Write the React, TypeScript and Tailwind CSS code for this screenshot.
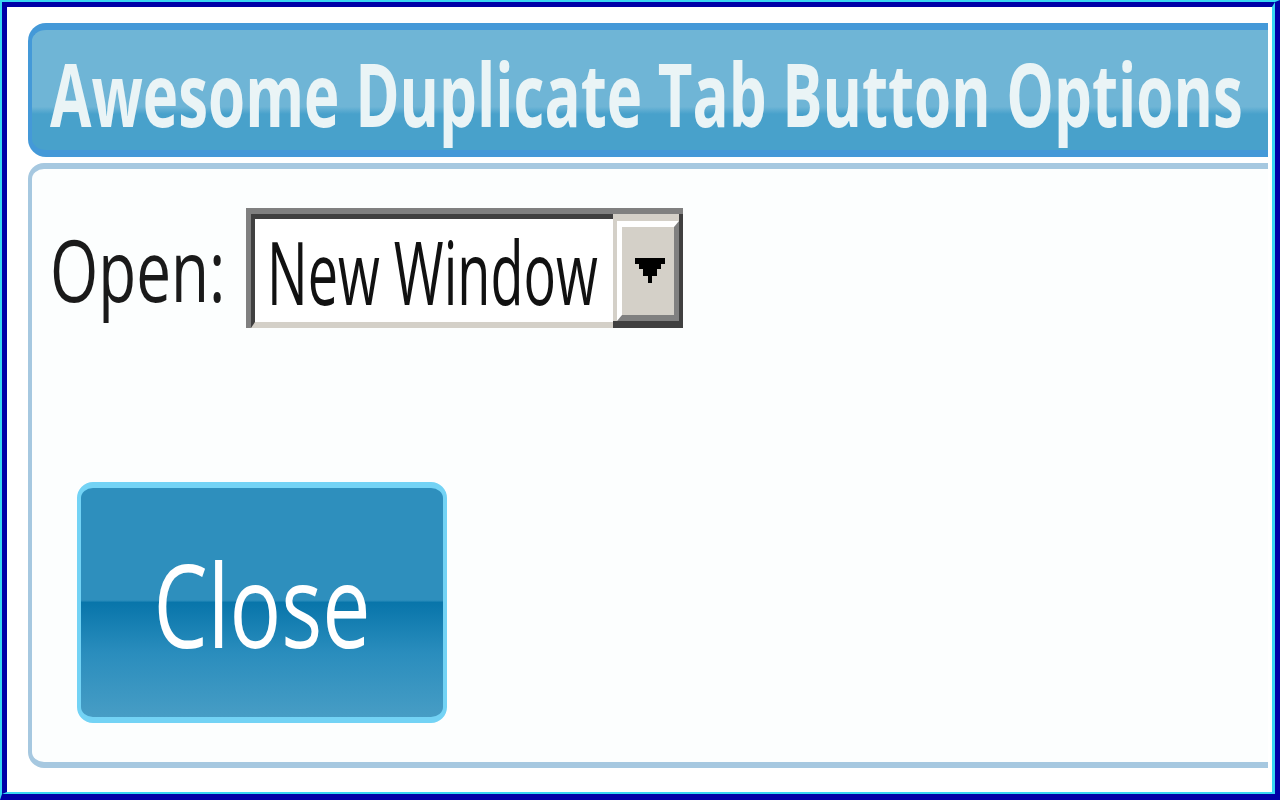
function DropArrow() {
  return (
    <svg width="30" height="25" viewBox="0 0 30 25" className="block">
      <path d="M0 0H30V6H26V11H22V18H17V25H13V18H8V11H4V6H0Z" fill="#000" />
    </svg>
  );
}

export default function App() {
  return (
    <div className="h-[800px] w-[1280px] overflow-hidden font-['Open_Sans',sans-serif]">
      {/* window frame */}
      <div className="h-full border-t-2 border-l-2 border-r-[5px] border-b-[6px] border-t-[#38d6f2] border-l-[#38d6f2] border-r-[#0000a8] border-b-[#0000a8]">
        <div className="h-full border-t-[5px] border-l-[5px] border-r-[3px] border-b-2 border-t-[#0000a8] border-l-[#0000a8] border-r-[#38d6f2] border-b-[#38d6f2] bg-white pl-[21px] pr-[4px] pt-[16px]">
          {/* title bar */}
          <div className="flex h-[134px] items-center overflow-hidden rounded-l-[18px] border-y-[7px] border-l-4 border-[#4499d8] bg-[linear-gradient(to_bottom,#6fb5d6_0%,#6fb5d6_64%,#48a1cb_70%,#48a1cb_100%)] pl-[18px]">
            <span className="inline-block origin-center translate-y-[3px] scale-y-[1.47] whitespace-nowrap text-[60px] font-bold leading-none text-[#eaf4f6]">
              Awesome Duplicate Tab Button Options
            </span>
          </div>

          {/* options panel */}
          <div className="mt-[6px] h-[605px] rounded-l-[16px] border-y-[6px] border-l-4 border-[#a6c8e0] bg-[#fcfefe] pl-[18px] pt-[39px]">
            <div className="flex items-center">
              <span className="inline-block w-[196px] origin-center scale-y-[1.4] text-[62px] leading-none text-[#1a1a1a]">
                Open:
              </span>
              <div className="flex h-[120px] w-[437px] border-t-[6px] border-l-[5px] border-t-[#808080] border-l-[#808080]">
                <div className="flex flex-1 border-t-[5px] border-l-[4px] border-b-[6px] border-t-[#404040] border-l-[#404040] border-b-[#d4d0c8]">
                  <div className="flex flex-1 items-center bg-white pl-[12px]">
                    <span className="inline-block origin-center scale-y-[1.62] whitespace-nowrap text-[54px] leading-none text-[#111]">
                      New Window
                    </span>
                  </div>
                </div>
                <div className="flex w-[70px] border-r-4 border-b-[7px] border-r-[#404040] border-b-[#404040]">
                  <div className="flex flex-1 border-t-[7px] border-l-4 border-t-[#d4d0c8] border-l-[#d4d0c8] bg-[#d4d0c8]">
                    <div className="flex flex-1 border-t-[6px] border-l-[5px] border-r-[5px] border-b-[6px] border-t-white border-l-white border-r-[#808080] border-b-[#808080] bg-[#d4d0c8]">
                      <div className="flex flex-1 items-center justify-center pb-[2px] pl-[4px]">
                        <DropArrow />
                      </div>
                    </div>
                  </div>
                </div>
              </div>
            </div>

            <button className="ml-[27px] mt-[154px] flex h-[241px] w-[370px] items-center justify-center rounded-[16px] border-x-4 border-y-[6px] border-[#73d3f5] bg-[linear-gradient(to_bottom,#2e8fbd_0%,#2e8fbd_49%,#0875aa_50%,#2a8dbd_72%,#479dc5_100%)]">
              <span className="inline-block origin-center scale-y-[1.35] text-[86px] leading-none text-white">
                Close
              </span>
            </button>
          </div>
        </div>
      </div>
    </div>
  );
}
